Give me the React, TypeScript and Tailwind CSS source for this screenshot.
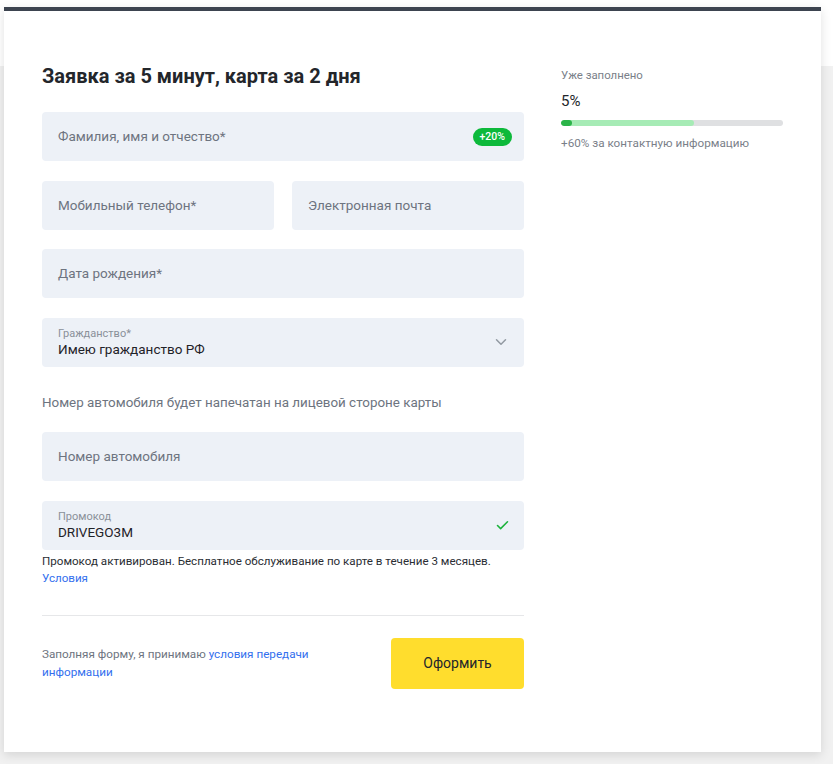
import { ChevronDown, Check } from "lucide-react";

function Field({ placeholder, className = "", badge }: { placeholder: string; className?: string; badge?: string }) {
  return (
    <div className={`flex h-[49px] items-center justify-between rounded bg-[#edf1f7] px-4 ${className}`}>
      <span className="text-[13.5px] text-[#6d7480]">{placeholder}</span>
      {badge && (
        <span className="flex h-[18px] items-center rounded-full bg-[#0db93b] px-[7px] text-[10.5px] font-medium text-white">
          {badge}
        </span>
      )}
    </div>
  );
}

function FilledField({ label, value, icon }: { label: string; value: string; icon: React.ReactNode }) {
  return (
    <div className="flex h-[49px] items-center justify-between rounded bg-[#edf1f7] pl-4 pr-[14px]">
      <div className="flex flex-col pt-[1px]">
        <span className="text-[11px] leading-[13px] text-[#8a9099]">{label}</span>
        <span className="text-[13.5px] leading-[18px] text-[#1f2228]">{value}</span>
      </div>
      {icon}
    </div>
  );
}

export default function App() {
  return (
    <div
      className="min-h-[764px] bg-[linear-gradient(to_bottom,#ffffff_66px,#f1f1f1_66px)] pt-[7px] pl-[4px] pr-[12px] pb-[12px]"
      style={{ fontFamily: "Roboto, 'Noto Sans', sans-serif" }}
    >
      <div className="h-[745px] border-t-4 border-[#3d4450] bg-white shadow-[0_3px_10px_rgba(0,0,0,0.12)]">
        <div className="flex pl-[38px] pt-[52px]">
          {/* form column */}
          <div className="w-[482px]">
            <h1 className="text-[20px] font-bold leading-[26px] text-[#23262b]">Заявка за 5 минут, карта за 2 дня</h1>

            <div className="mt-[23px] flex flex-col gap-[19.5px]">
              <Field placeholder="Фамилия, имя и отчество*" badge="+20%" className="pr-3" />
              <div className="flex gap-[18px]">
                <Field placeholder="Мобильный телефон*" className="flex-1" />
                <Field placeholder="Электронная почта" className="flex-1" />
              </div>
              <Field placeholder="Дата рождения*" />
              <FilledField
                label="Гражданство*"
                value="Имею гражданство РФ"
                icon={<ChevronDown className="h-[18px] w-[18px] text-[#9299a2]" strokeWidth={2} />}
              />
            </div>

            <p className="mt-[27.5px] text-[13.4px] leading-[18px] text-[#6d7480]">
              Номер автомобиля будет напечатан на лицевой стороне карты
            </p>

            <div className="mt-[20px] flex flex-col gap-[19.5px]">
              <Field placeholder="Номер автомобиля" />
              <FilledField
                label="Промокод"
                value="DRIVEGO3M"
                icon={<Check className="h-[15px] w-[15px] text-[#1cb33c]" strokeWidth={2.5} />}
              />
            </div>

            <p className="mt-[3px] text-[11.6px] leading-[17px] text-[#2a2d33]">
              Промокод активирован. Бесплатное обслуживание по карте в течение 3 месяцев.
            </p>
            <a className="block text-[11.6px] leading-[17px] text-[#336fee]">Условия</a>

            <div className="mt-[28px] border-t border-[#e6e7e9]" />

            <div className="mt-[22px] flex items-center justify-between">
              <p className="w-[290px] text-[11.7px] leading-[18px] text-[#6d7480]">
                Заполняя форму, я принимаю <a className="text-[#336fee]">условия передачи информации</a>
              </p>
              <button className="h-[51px] w-[133px] rounded bg-[#ffdd2d] text-[14px] text-[#23262b]">Оформить</button>
            </div>
          </div>

          {/* progress column */}
          <div className="ml-[37px] w-[222px] pt-[5px]">
            <div className="text-[11.4px] leading-[14px] text-[#7a8089]">Уже заполнено</div>
            <div className="mt-[9px] text-[15px] leading-[20px] text-[#23262b]">5%</div>
            <div className="mt-[9px] flex h-[6px] overflow-hidden rounded-full bg-[#dfe0e2]">
              <div className="relative h-full w-[60%] rounded-full bg-[#a6ebb5]">
                <div className="absolute left-0 top-0 h-full w-[11px] rounded-full bg-[#2bb449]" />
              </div>
            </div>
            <div className="mt-[10px] text-[11.7px] leading-[14px] text-[#7a8089]">+60% за контактную информацию</div>
          </div>
        </div>
      </div>
    </div>
  );
}
